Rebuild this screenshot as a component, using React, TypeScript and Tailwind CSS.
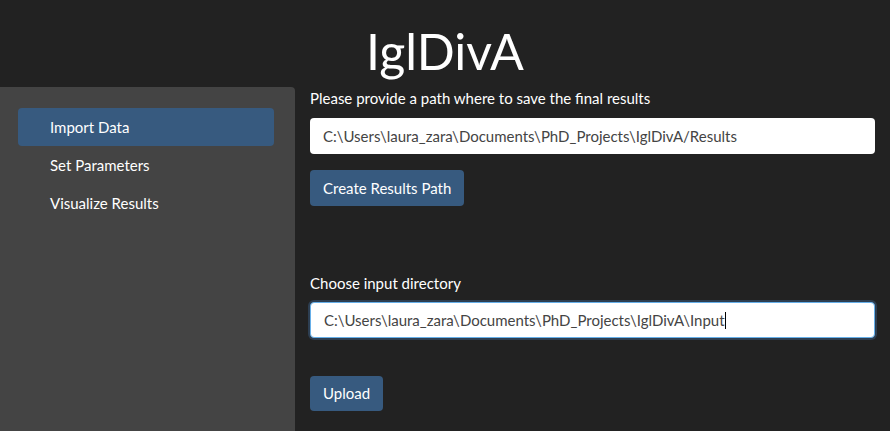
import React from "react";

export default function App() {
  const font = { fontFamily: "Lato, 'Open Sans', sans-serif" };
  return (
    <div className="w-[890px] h-[431px] bg-[#222222] overflow-hidden text-white flex flex-col" style={font}>
      <div className="h-[87px] flex items-center justify-center">
        <h1 className="text-[50px] leading-none font-normal mt-[14px] text-white">IglDivA</h1>
      </div>
      <div className="flex flex-1">
        <div className="w-[295px] bg-[#444444] rounded-tr-[4px] pt-[21px] pl-[18px] pr-[21px] flex flex-col">
          <div className="h-[38px] rounded-[4px] bg-[#375a7f] pl-[32px] flex items-center text-[15px]">Import Data</div>
          <div className="h-[38px] pl-[32px] flex items-center text-[15px]">Set Parameters</div>
          <div className="h-[38px] pl-[32px] flex items-center text-[15px]">Visualize Results</div>
        </div>
        <div className="flex-1 pl-[15px] pr-[15px] flex flex-col">
          <div className="text-[15px] leading-[21px] mt-[1px] h-[21px]">Please provide a path where to save the final results</div>
          <div className="mt-[9px] h-[36px] bg-white rounded-[4px] flex items-center pl-[13px] text-[15px] text-[#444444]">
            C:\Users\laura_zara\Documents\PhD_Projects\IglDivA/Results
          </div>
          <div className="mt-[16px]">
            <div className="inline-flex h-[36px] items-center px-[13px] rounded-[4px] bg-[#375a7f] text-[15px] text-white">Create Results Path</div>
          </div>
          <div className="mt-[67px] text-[15px] leading-[21px] h-[21px]">Choose input directory</div>
          <div className="mt-[8px] h-[36px] bg-white rounded-[4px] flex items-center pl-[13px] text-[15px] text-[#444444] border border-[#66afe9] shadow-[0_0_0_2px_rgba(55,90,127,0.5)]">
            C:\Users\laura_zara\Documents\PhD_Projects\IglDivA\Input<span className="inline-block w-[1px] h-[17px] bg-black"></span>
          </div>
          <div className="mt-[38px]">
            <div className="inline-flex h-[35px] items-center px-[13px] rounded-[4px] bg-[#375a7f] text-[15px] text-white">Upload</div>
          </div>
        </div>
      </div>
    </div>
  );
}
